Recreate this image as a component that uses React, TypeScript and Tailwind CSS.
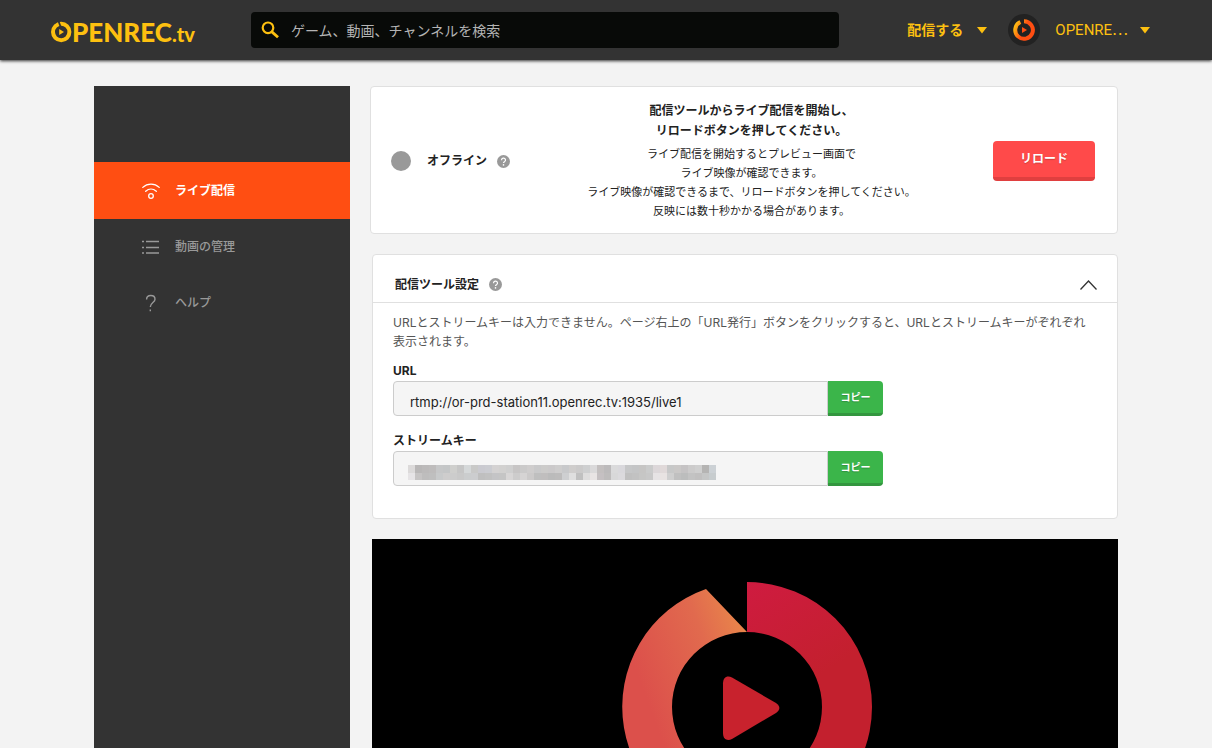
import type { ReactNode } from "react";

const MOSAIC_TOP = [
  "#dcdada", "#b9b7b7", "#bcbaba", "#bebcbc", "#c6c7c8", "#c4c6c7", "#cfcfcd", "#c6c6c6", "#d5d8d9", "#c9c9c8", "#cacad0",
  "#cbccd1", "#d4d2d2", "#d2d1d0", "#cfcfcf", "#c7c5c5", "#cbcaca", "#cfcdcd", "#c9c9ca", "#cccbca", "#cbc9ca", "#cecdcd",
  "#c8c9cb", "#cfcdcc", "#cbcaca", "#cecfd0", "#dad9da", "#c3bfbf", "#bcbabb", "#dadadb", "#d9d8dc", "#c6c7c8", "#c4c5c6",
  "#c6c5c4", "#cacbcb", "#dcd7d9", "#e0d9d9", "#c7c8c8", "#cac8c7", "#c5c3c4", "#cccbcb", "#cfcfcf", "#b5b4b3", "#ccd1d5",
];

const MOSAIC_BOTTOM = [
  "#e6e4e6", "#c6c4c4", "#bebdbd", "#bfbfbf", "#c8cacb", "#cecdcd", "#cccccc", "#c9c9c9", "#cbcdce", "#cccdcf", "#bfbfbf",
  "#c1c1c1", "#c4c4c6", "#c5c5c5", "#d8d6d6", "#cdcccc", "#d6d4d4", "#cccaca", "#bfbfbf", "#c0bebe", "#bbbbbb", "#bdbcbc",
  "#cecfd1", "#dfdfdf", "#c0c0c0", "#dedddd", "#e8e4e4", "#c5c0c2", "#bebcbc", "#d8d8d9", "#dbdadd", "#c0c0c0", "#c2c2c2",
  "#c6c6c5", "#c8c8c8", "#e6e3e4", "#e8e3e2", "#cfcfcf", "#c0c0c0", "#bcbdbd", "#c3c3c3", "#c1c0c0", "#c5c6c6", "#c7ccce",
];

const CaretDown = () => (
  <svg width="10" height="7" viewBox="0 0 10 7" className="fill-[#fdc010]" aria-hidden="true">
    <path d="M0 0h10L5 6.5z" />
  </svg>
);

const HelpButton = () => (
  <button type="button" aria-label="ヘルプ" className="shrink-0">
    <svg width="13" height="13" viewBox="0 0 13 13" aria-hidden="true">
      <circle cx="6.5" cy="6.5" r="6.5" fill="#999" />
      <path
        d="M4.5 5.2a2 2 0 1 1 3 1.6c-.7.4-1 .7-1 1.3"
        fill="none"
        stroke="#fff"
        strokeWidth="1.2"
      />
      <circle cx="6.5" cy="9.9" r=".8" fill="#fff" />
    </svg>
  </button>
);

const Header = () => (
  <header className="relative flex h-15 items-center bg-[#333] pr-[62px] pl-[51px] shadow-[0_1px_3px_rgba(0,0,0,0.8)]">
    <a href="#" aria-label="OPENREC.tv" className="flex w-[200px] shrink-0 items-center pt-1 text-[#fdc010]">
      <svg width="21" height="22" viewBox="0 0 21 22" aria-hidden="true">
        <circle cx="10.2" cy="11" r="8.2" fill="none" stroke="currentColor" strokeWidth="4" />
        <path d="M7.4 0 9.8 6.2" stroke="#333" strokeWidth="1.8" />
        <path d="M8.2 8v6l4.800-3z" fill="currentColor" />
      </svg>
      <span className="flex items-baseline font-['Lato',sans-serif] leading-8 font-black">
        <span className="text-[26px]">PENREC</span>
        <span className="text-xl">.tv</span>
      </span>
    </a>
    <form role="search" className="flex h-9 max-w-[588px] flex-1 items-center rounded bg-[#080a08] pl-2.5">
      <svg width="18" height="18" viewBox="0 0 18 18" fill="none" stroke="#fdc010" aria-hidden="true">
        <circle cx="7" cy="6.8" r="5.3" strokeWidth="2.2" />
        <path d="m10.6 10.6 6.4 5.6" strokeWidth="2.8" />
      </svg>
      <input
        type="text"
        aria-label="検索"
        placeholder="ゲーム、動画、チャンネルを検索"
        className="ml-3 min-w-0 flex-1 bg-transparent pt-0.5 text-sm text-white outline-none placeholder:text-[#b4b4b4]"
      />
    </form>
    <nav className="ml-auto flex items-center text-[#fdc010]">
      <button type="button" className="flex items-center gap-3.5 text-sm font-bold">
        配信する
        <CaretDown />
      </button>
      <button type="button" className="ml-5 flex items-center">
        <svg width="34" height="34" viewBox="0 0 34 34" className="mr-3.5" aria-hidden="true">
          <defs>
            <linearGradient id="avatar" x1="0" y1="0" x2="1" y2="0.5">
              <stop offset="0.1" stopColor="#fdb813" />
              <stop offset="0.6" stopColor="#ff4e12" />
            </linearGradient>
          </defs>
          <circle cx="17" cy="17" r="16" fill="#222" />
          <path d="M17 8.2a8.8 8.8 0 1 1-3.6.8" fill="none" stroke="url(#avatar)" strokeWidth="4" />
          <path d="M15 14v6l5-3z" fill="#ff4e12" />
        </svg>
        <span className="mr-3 font-['Roboto','Noto_Sans_CJK_JP',sans-serif] text-[15px]">OPENRE⋯</span>
        <CaretDown />
      </button>
    </nav>
  </header>
);

const WifiIcon = () => (
  <svg width="18" height="18" viewBox="0 0 18 18" fill="none" stroke="currentColor" strokeWidth="1.3" strokeLinecap="round" aria-hidden="true">
    <path d="M.8 5.4C5.5 1 12.5 1 17.2 5.4M3.7 9.2c3.2-2.9 7.4-2.9 10.6 0" />
    <circle cx="9" cy="14" r="2.3" />
  </svg>
);

const ListIcon = () => (
  <svg width="18" height="14" viewBox="0 0 18 14" fill="none" stroke="currentColor" strokeWidth="1.5" aria-hidden="true">
    <path d="M0 1.5h2M4 1.500H17M0 7.500h2M4 7.500H17M0 13h2M4 13H17" />
  </svg>
);

const QuestionIcon = () => (
  <svg width="18" height="18" viewBox="0 0 18 18" fill="none" stroke="currentColor" strokeWidth="1.4" aria-hidden="true">
    <path d="M4.6 5.4C4.6 3 6.500 1.500 8.800 1.500s4.200 1.400 4.200 3.700c0 3.400-4.700 3.300-4.700 7.800M8.300 15.400v1.800" />
  </svg>
);

const SidebarLink = ({
  icon,
  label,
  active = false,
}: {
  icon: ReactNode;
  label: string;
  active?: boolean;
}) => (
  <a
    href="#"
    className={
      active
        ? "flex h-[57px] items-center gap-[15px] bg-[#ff4e12] pl-12 text-xs font-bold text-white"
        : "flex h-14 items-center gap-[15px] pl-12 text-xs font-medium text-[#999]"
    }
  >
    {icon}
    {label}
  </a>
);

const Sidebar = () => (
  <aside className="w-64 shrink-0 bg-[#333] pt-19">
    <nav>
      <SidebarLink icon={<WifiIcon />} label="ライブ配信" active />
      <SidebarLink icon={<ListIcon />} label="動画の管理" />
      <SidebarLink icon={<QuestionIcon />} label="ヘルプ" />
    </nav>
  </aside>
);

const StatusCard = () => (
  <section className="flex items-center rounded border border-[#e0e0e0] bg-white pt-3.5 pr-[22px] pb-3 pl-5">
    <div className="flex shrink-0 items-center">
      <span className="size-5 rounded-full bg-[#999]" />
      <span className="mr-2.5 ml-4 text-xs font-bold">オフライン</span>
      <HelpButton />
    </div>
    <div className="flex-1 text-center">
      <p className="mb-1 text-xs leading-5 font-bold">
        配信ツールからライブ配信を開始し、
        <br />
        リロードボタンを押してください。
      </p>
      <p className="text-[11px] leading-[19px]">
        ライブ配信を開始するとプレビュー画面で
        <br />
        ライブ映像が確認できます。
        <br />
        ライブ映像が確認できるまで、リロードボタンを押してください。
        <br />
        反映には数十秒かかる場合があります。
      </p>
    </div>
    <button
      type="button"
      className="h-10 w-[102px] shrink-0 rounded border-b-4 border-[#e03f3f] bg-[#ff4a4a] text-xs font-bold text-white text-shadow-xs"
    >
      リロード
    </button>
  </section>
);

const CopyField = ({
  id,
  label,
  value,
  children,
}: {
  id: string;
  label: string;
  value: string;
  children?: ReactNode;
}) => (
  <div>
    <label htmlFor={id} className="block text-xs leading-5 font-bold">
      {label}
    </label>
    <div className="relative flex h-[35px] max-w-[490px]">
      <input
        id={id}
        type="text"
        readOnly
        value={value}
        className="min-w-0 flex-1 rounded-l border border-[#ccc] bg-[#f5f5f5] px-4 pt-2 text-[13px] outline-none"
      />
      <button
        type="button"
        className="w-[55px] rounded-r border-b-3 border-[#33963f] bg-[#3bb54a] text-[10px] font-bold text-white text-shadow-xs"
      >
        コピー
      </button>
      {children}
    </div>
  </div>
);

const HiddenKey = () => (
  <svg width="308" height="15" viewBox="0 0 44 2" preserveAspectRatio="none" shapeRendering="crispEdges" className="absolute top-3.5 left-[15px]" aria-hidden="true">
    {MOSAIC_TOP.map((color, i) => (
      <rect key={i} x={i} y="0" width="1" height="1" fill={color} />
    ))}
    {MOSAIC_BOTTOM.map((color, i) => (
      <rect key={i} x={i} y="1" width="1" height="1" fill={color} />
    ))}
  </svg>
);

const SettingsCard = () => (
  <section className="ml-0.5 rounded border border-[#e0e0e0] bg-white">
    <div className="flex h-12 items-center border-b border-[#e0e0e0] px-5 pt-3">
      <h2 className="mr-2.5 ml-0.5 text-xs font-bold">配信ツール設定</h2>
      <HelpButton />
      <button type="button" aria-label="閉じる" className="ml-auto">
        <svg width="17" height="10" viewBox="0 0 17 10" fill="none" stroke="#333" strokeWidth="1.3" aria-hidden="true">
          <path d="M.5 9.5 8.5 1l8 8.5" />
        </svg>
      </button>
    </div>
    <div className="px-5 pt-2.5 pb-8">
      <p className="mb-2.5 text-xs leading-[19px] text-[#555]">
        URLとストリームキーは入力できません。ページ右上の「URL発行」ボタンをクリックすると、URLとストリームキーがぞれぞれ
        <br />
        表示されます。
      </p>
      <div className="flex flex-col gap-[15px]">
        <CopyField id="url" label="URL" value="rtmp://or-prd-station11.openrec.tv:1935/live1" />
        <CopyField id="stream-key" label="ストリームキー" value="">
          <HiddenKey />
        </CopyField>
      </div>
    </div>
  </section>
);

const Preview = () => (
  <section className="ml-0.5 min-h-0 flex-1 overflow-hidden bg-black pt-[43px] pl-1">
    <svg width="250" height="250" viewBox="0 0 250 250" className="mx-auto" aria-hidden="true">
      <defs>
        <linearGradient id="ring-right" x1="0" y1="0" x2="0.3" y2="1">
          <stop offset="0" stopColor="#cf1b40" />
          <stop offset="0.5" stopColor="#c3202e" />
        </linearGradient>
        <linearGradient id="ring-left" x1="1" y1="0.1" x2="0.3" y2="0.6">
          <stop offset="0" stopColor="#ea8a4a" />
          <stop offset="0.4" stopColor="#e16a4e" />
          <stop offset="1" stopColor="#dc504b" />
        </linearGradient>
      </defs>
      <path d="M125 0a125 125 0 0 1 0 250V200a75 75 0 0 0 0-150z" fill="url(#ring-right)" />
      <path d="M125 250A125 125 0 0 1 84 7L125 50a75 75 0 0 0 0 150z" fill="url(#ring-left)" />
      <path
        d="M101 101.5c0-6 4-8.500 9-6l44 25.500c4.500 3 4.500 7 0 10l-44 26c-5 2.500-9 0-9-6z"
        fill="#c8222d"
      />
    </svg>
  </section>
);

const App = () => (
  <div className="flex h-screen flex-col overflow-hidden bg-[#f3f3f3] font-['Inter','Noto_Sans_CJK_JP',sans-serif] text-[#222]">
    <Header />
    <div className="mx-auto flex min-h-0 w-full max-w-5xl flex-1 gap-5 pt-[26px]">
      <Sidebar />
      <main className="flex min-w-0 flex-1 flex-col">
        <div className="flex shrink-0 flex-col gap-5 pb-5">
          <StatusCard />
          <SettingsCard />
        </div>
        <Preview />
      </main>
    </div>
  </div>
);

export default App;
